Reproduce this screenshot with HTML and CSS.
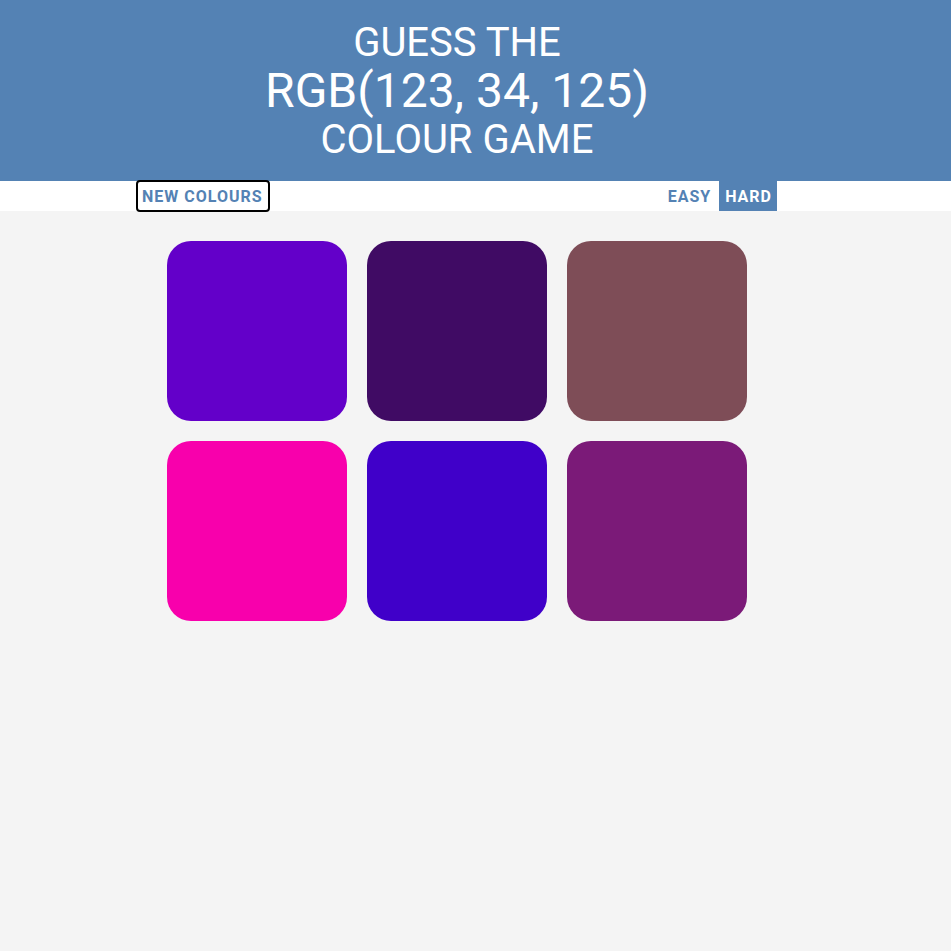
FILE: index.html
```html
<!DOCTYPE html>
<html lang="en">
<head>
<meta charset="utf-8">
<title>Colour Game</title>
<link rel="stylesheet" href="styles.css">
</head>
<body>
<header class="header">
  <h1 class="title">
    <span class="title-line">Guess the</span>
    <span class="title-rgb">RGB(123, 34, 125)</span>
    <span class="title-line">Colour Game</span>
  </h1>
</header>
<nav class="stripe">
  <div class="stripe-inner">
    <button class="btn btn-new">New Colours</button>
    <div class="modes">
      <button class="btn">Easy</button>
      <button class="btn selected">Hard</button>
    </div>
  </div>
</nav>
<main class="board">
  <div class="grid">
    <div class="square sq1"></div>
    <div class="square sq2"></div>
    <div class="square sq3"></div>
    <div class="square sq4"></div>
    <div class="square sq5"></div>
    <div class="square sq6"></div>
  </div>
</main>
</body>
</html>
```
FILE: styles.css
```css
* { box-sizing: border-box; }
html, body { margin: 0; padding: 0; }
body {
  background: #f4f4f4;
  font-family: Roboto, "Liberation Sans", sans-serif;
  min-height: 951px;
}
.header {
  background: #5482b4;
  height: 181px;
  padding-right: 37px;
  color: #fff;
  text-align: center;
}
.title {
  margin: 0;
  padding-top: 19px;
  font-weight: 400;
  text-transform: uppercase;
  display: flex;
  flex-direction: column;
  align-items: center;
}
.title-line {
  font-size: 40px;
  line-height: 47px;
}
.title-rgb {
  font-size: 48px;
  line-height: 50px;
}
.stripe {
  background: #fff;
  height: 30px;
  display: flex;
  justify-content: center;
  padding-right: 38px;
}
.stripe-inner {
  width: 641px;
  display: flex;
  justify-content: space-between;
  align-items: stretch;
}
.modes { display: flex; gap: 3px; }
.btn {
  font-family: Roboto, "Liberation Sans", sans-serif;
  font-weight: 700;
  font-size: 16px;
  text-transform: uppercase;
  letter-spacing: 1px;
  color: #5482b4;
  background: none;
  border: none;
  padding: 0 5px 0 6px;
  height: 30px;
  margin: 0;
}
.btn.selected {
  background: #5482b4;
  color: #fff;
}
.btn-new {
  border: 2px solid #000;
  border-radius: 4px;
  height: 32px;
  margin-top: -1px;
  padding: 0 5px 0 4px;
}
.board {
  display: flex;
  justify-content: center;
  padding-right: 37px;
  padding-top: 30px;
}
.grid {
  display: grid;
  grid-template-columns: repeat(3, 180px);
  grid-auto-rows: 180px;
  gap: 20px;
}
.square { border-radius: 24px; }
.sq1 { background: rgb(99, 0, 201); }
.sq2 { background: rgb(64, 11, 100); }
.sq3 { background: rgb(126, 77, 87); }
.sq4 { background: rgb(248, 0, 172); }
.sq5 { background: rgb(64, 0, 201); }
.sq6 { background: rgb(123, 26, 120); }
```
